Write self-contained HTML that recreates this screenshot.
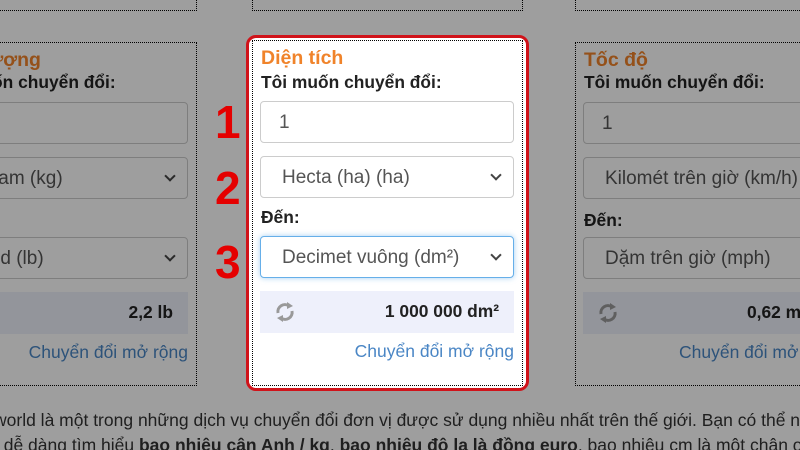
<!DOCTYPE html>
<html><head><meta charset="utf-8">
<style>
*{box-sizing:border-box;margin:0;padding:0}
html,body{width:800px;height:450px;overflow:hidden;background:#fff;font-family:"Liberation Sans",Arial,sans-serif}
.wrap{position:absolute;left:0;top:0;width:800px;height:450px;overflow:hidden}
.card{position:absolute;width:271px;border:1px dotted #000;background:#fff;overflow:hidden}
.t{position:absolute;left:8px;font-weight:bold;font-size:19.5px;color:#f0832a;top:6px;white-space:nowrap}
.l{position:absolute;left:8px;font-weight:bold;font-size:17.4px;color:#222;white-space:nowrap}
.in{position:absolute;left:7px;width:254px;height:42px;border:1px solid #ccc;border-radius:4px;background:#fff;font-size:19px;color:#555;padding:10px 0 0 21px;white-space:nowrap;overflow:hidden}
.in.num{padding-left:18px}
.in.sel:after{content:"";position:absolute;right:13px;top:14px;width:6px;height:6px;border-right:2px solid #444;border-bottom:2px solid #444;transform:rotate(45deg)}
.in.focus{border-color:#66afe9;box-shadow:0 0 6px rgba(102,175,233,.6)}
.res{position:absolute;left:7px;width:254px;height:42px;background:#eef0fb;font-size:17.4px;font-weight:bold;color:#222;text-align:right;padding:10px 15px 0 0;white-space:nowrap}
.res svg{position:absolute;left:14px;top:9px}
.lk{position:absolute;right:8px;font-size:17.5px;color:#4a86c5;white-space:nowrap}
.ov{position:absolute;left:0;top:0;width:800px;height:450px;background:rgba(0,0,0,.38);z-index:5}
.txt{position:absolute;left:-6px;top:408px;width:806px;overflow:hidden;font-size:17.5px;color:#333;white-space:nowrap;line-height:25px}
.n{position:absolute;left:215px;font-size:46px;font-weight:bold;color:#e50000;z-index:6}
.hl{z-index:7}
.frame{position:absolute;left:246px;top:35px;width:283px;height:356px;border:3px solid #d0131a;border-radius:10px;z-index:6;background:#fff}
</style></head><body>
<div class="wrap">

<div class="card" style="left:-74px;top:-300px;height:311px"></div>
<div class="card" style="left:252px;top:-300px;height:311px"></div>
<div class="card" style="left:575px;top:-300px;height:311px;width:225px;border-right:none"></div>

<div class="card" style="left:-74px;top:42px;height:344px">
 <div class="t">Khối lượng</div>
 <div class="l" style="top:29px">Tôi muốn chuyển đổi:</div>
 <div class="in num" style="top:59px">1</div>
 <div class="in sel" style="top:114px">Kilogam (kg)</div>
 <div class="l" style="top:167px">Đến:</div>
 <div class="in sel" style="top:194px">Pound (lb)</div>
 <div class="res" style="top:249px">2,2 lb</div>
 <div class="lk" style="top:299px">Chuyển đổi mở rộng</div>
</div>

<div class="card" style="left:575px;top:42px;height:344px;width:225px;border-right:none">
 <div class="t">Tốc độ</div>
 <div class="l" style="top:29px">Tôi muốn chuyển đổi:</div>
 <div class="in num" style="top:59px">1</div>
 <div class="in sel" style="top:114px">Kilomét trên giờ (km/h)</div>
 <div class="l" style="top:167px">Đến:</div>
 <div class="in sel" style="top:194px">Dặm trên giờ (mph)</div>
 <div class="res" style="top:249px;text-align:left;padding-left:164px"><svg width="22" height="24" viewBox="0 0 22 24"><path d="M4 13 A7 7 0 0 1 15 6" fill="none" stroke="#999" stroke-width="3"/><path d="M13 2 L19 6 L13 9 Z" fill="#999"/><path d="M18 11 A7 7 0 0 1 7 18" fill="none" stroke="#999" stroke-width="3"/><path d="M9 22 L3 18 L9 15 Z" fill="#999"/></svg>0,62 mph</div>
 <div class="lk" style="top:299px;left:103px;right:auto">Chuyển đổi mở rộng</div>
</div>

<div class="txt">world là một trong những dịch vụ chuyển đổi đơn vị được sử dụng nhiều nhất trên thế giới. Bạn có thể nhận được<br>&nbsp; dễ dàng tìm hiểu <b>bao nhiêu cân Anh / kg</b>, <b>bao nhiêu đô la là đồng euro</b>, bao nhiêu cm là một chân or</div>

<div class="ov"></div>

<div class="n" style="top:95px">1</div>
<div class="n" style="top:161px">2</div>
<div class="n" style="top:235px">3</div>

<div class="frame"></div>
<div class="card hl" style="left:252px;top:40px;height:346px">
 <div class="t">Diện tích</div>
 <div class="l" style="top:31px">Tôi muốn chuyển đổi:</div>
 <div class="in num" style="top:60px">1</div>
 <div class="in sel" style="top:115px">Hecta (ha) (ha)</div>
 <div class="l" style="top:166px">Đến:</div>
 <div class="in sel focus" style="top:195px">Decimet vuông (dm²)</div>
 <div class="res" style="top:250px"><svg width="22" height="24" viewBox="0 0 22 24"><path d="M4 13 A7 7 0 0 1 15 6" fill="none" stroke="#999" stroke-width="3"/><path d="M13 2 L19 6 L13 9 Z" fill="#999"/><path d="M18 11 A7 7 0 0 1 7 18" fill="none" stroke="#999" stroke-width="3"/><path d="M9 22 L3 18 L9 15 Z" fill="#999"/></svg>1 000 000 dm²</div>
 <div class="lk" style="top:300px">Chuyển đổi mở rộng</div>
</div>

</div>
</body></html>
